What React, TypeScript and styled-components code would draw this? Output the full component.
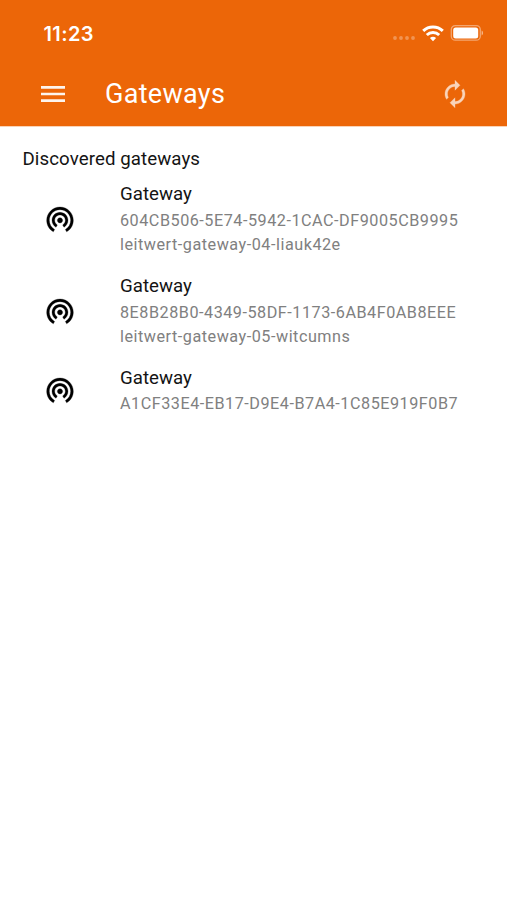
import React from "react";
import styled, { createGlobalStyle } from "styled-components";
import { MdAutorenew, MdMenu, MdWifiTethering } from "react-icons/md";

const GlobalStyle = createGlobalStyle`
  * { box-sizing: border-box; }
  html, body { margin: 0; background: #fff; }
  body { font-family: Roboto, sans-serif; color: #141414; overflow: hidden; }
`;

const Screen = styled.div`
  width: 507px;
  height: 900px;
  background: #fff;
`;

const Header = styled.header`
  height: 126px;
  background: #ec6608;
  color: #fff;
  box-shadow: 0 1px 0 #f9d3b7;
`;

const StatusBar = styled.div`
  height: 62px;
  padding: 5px 24px 0 43.5px;
  display: flex;
  align-items: center;
  justify-content: space-between;
`;

const Time = styled.time`
  font: 600 20px/24px Inter, sans-serif;
  letter-spacing: 0.4px;
`;

const StatusIcons = styled.svg`
  width: 92px;
  height: 20px;
  display: block;
`;

const Toolbar = styled.div`
  height: 64px;
  padding: 0 37px;
  display: flex;
  align-items: center;
`;

const IconButton = styled.button<{ $faded?: boolean }>`
  display: flex;
  padding: 0;
  border: 0;
  background: none;
  color: #fff;
  opacity: ${(p) => (p.$faded ? 0.72 : 0.93)};

  path:not([fill="none"]) {
    stroke: ${(p) => (p.$faded ? "#fff" : "none")};
    stroke-width: 0.25px;
  }
`;

const Title = styled.h1`
  flex: 1;
  margin: 0 0 0 36px;
  font-size: 27px;
  line-height: 32px;
  font-weight: 400;
  letter-spacing: 0.3px;
`;

const SectionTitle = styled.h2`
  margin: 0;
  padding: 22px 22.5px 0;
  font-size: 18.7px;
  line-height: 22px;
  font-weight: 400;
  letter-spacing: 0.08px;
`;

const List = styled.ul`
  margin: 0;
  padding: 12.3px 0 0;
  list-style: none;
`;

const Row = styled.li`
  height: 91.7px;
  display: grid;
  grid-template-columns: 120px 1fr;
`;

const RowIcon = styled.div<{ $top: number }>`
  padding: ${(p) => p.$top}px 0 0 44.3px;
  color: #000;

  path:not([fill="none"]) {
    stroke: #000;
    stroke-width: 0.2px;
  }
`;

const Name = styled.div`
  font-size: 18.7px;
  line-height: 24px;
`;

const Details = styled.div`
  padding-top: 2.7px;
`;

const Detail = styled.div`
  font-size: 16.2px;
  line-height: 24px;
  letter-spacing: 0.52px;
  color: #808080;
  white-space: nowrap;
`;

const gateways = [
  { id: "604CB506-5E74-5942-1CAC-DF9005CB9995", host: "leitwert-gateway-04-liauk42e" },
  { id: "8E8B28B0-4349-58DF-1173-6AB4F0AB8EEE", host: "leitwert-gateway-05-witcumns" },
  { id: "A1CF33E4-EB17-D9E4-B7A4-1C85E919F0B7" },
];

export default function App() {
  return (
    <Screen>
      <GlobalStyle />
      <Header>
        <StatusBar>
          <Time>11:23</Time>
          <StatusIcons viewBox="0 0 92 20" fill="none">
            <g fill="#fff" opacity=".3">
              <circle cx="4" cy="14" r="1.9" />
              <circle cx="10" cy="14" r="1.9" />
              <circle cx="16" cy="14" r="1.9" />
              <circle cx="22" cy="14" r="1.9" />
            </g>
            <g stroke="#fff" strokeWidth="3">
              <path d="M32.200 6.800a14.400 14.400 0 0 1 19.600 0" />
              <path d="M35.800 11a9 9 0 0 1 12.400 0" />
            </g>
            <path d="M38.900 14a4.800 4.800 0 0 1 6.200 0L42 17.300z" fill="#fff" />
            <rect x="60.300" y="1.600" width="29" height="14.600" rx="4" stroke="#fff" strokeOpacity=".42" strokeWidth="1.300" />
            <rect x="62.200" y="3.400" width="25" height="11" rx="2.500" fill="#fff" />
            <path d="M90.600 6.600v4.800c2-.6 2-4.200 0-4.800z" fill="#fff" opacity=".5" />
          </StatusIcons>
        </StatusBar>
        <Toolbar>
          <IconButton aria-label="Menu"><MdMenu size={32} /></IconButton>
          <Title>Gateways</Title>
          <IconButton aria-label="Refresh" $faded><MdAutorenew size={30} /></IconButton>
        </Toolbar>
      </Header>
      <SectionTitle>Discovered gateways</SectionTitle>
      <List>
        {gateways.map((g) => (
          <Row key={g.id}>
            <RowIcon $top={g.host ? 20.7 : 8.7}><MdWifiTethering size={32} /></RowIcon>
            <div>
              <Name>Gateway</Name>
              <Details>
                <Detail>{g.id}</Detail>
                {g.host && <Detail>{g.host}</Detail>}
              </Details>
            </div>
          </Row>
        ))}
      </List>
    </Screen>
  );
}
